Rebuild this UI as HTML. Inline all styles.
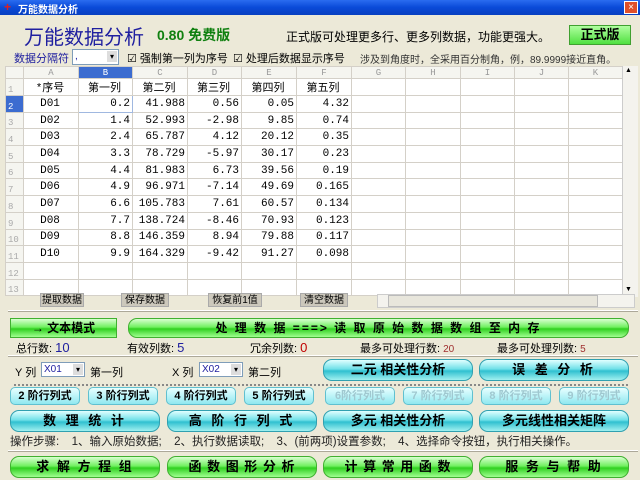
<!DOCTYPE html><html><head><meta charset="utf-8"><style>
*{margin:0;padding:0;box-sizing:border-box}
body{width:640px;height:480px;overflow:hidden;background:#ece9d8;font-family:"Liberation Sans","Noto Sans CJK SC",sans-serif;font-size:11px;position:relative;color:#000}
.a{position:absolute;white-space:nowrap}
.tb{left:0;top:0;width:640px;height:15px;background:linear-gradient(#2a6cf0,#0a4ad8 50%,#0840c0);color:#fff;font-size:10px;font-weight:bold;padding:1px 0 0 18px}
table{border-collapse:collapse;position:absolute;left:5px;top:66px;table-layout:fixed;background:#fff}
td{border:1px solid #d4d0c8;height:16.7px;font-size:11px;font-family:"Liberation Mono","Noto Sans CJK SC",monospace;text-align:right;padding-right:2px;overflow:hidden}
tr.h td{height:12px;background:#f5f5f0;color:#999;text-align:center;font-size:9px;padding:0}
td.n{background:#f5f5f0;color:#aaa;font-size:9px;text-align:left;padding-left:2px;vertical-align:bottom}
.c{text-align:center}
.gb{border-radius:9px;background:linear-gradient(#d8ffd0,#70f060 45%,#30d020 55%,#a0ff90);border:1px solid #40b030;font-weight:bold;text-align:center;font-size:12px}
.cb{border-radius:9px;background:linear-gradient(#e0ffff,#70e0e8 45%,#30c0d0 55%,#a0f0f0);border:1px solid #30a0b0;font-weight:bold;text-align:center;font-size:12px}
.sm{border-radius:5px;background:linear-gradient(#e8ffff,#90e8f0);border:1px solid #60c0d0;font-weight:bold;text-align:center;font-size:11px;height:18px;line-height:17px}
.dis{color:#a0c8d0}
.gray{background:#ccc8bc;border:1px solid #aaa;font-size:10px;height:14px;line-height:13px;text-align:center}
.sep{border-top:1px solid #fff;border-bottom:1px solid #aca899;height:2px;left:8px;width:630px}
.sel{height:15px;background:#fff;border:1px solid #7f9db9;font-size:10px;color:#2020a0;padding-left:2px;line-height:13px;width:44px}
.sel:after{content:"▾";position:absolute;right:1px;top:1px;width:10px;height:11px;background:#ddd;color:#000;font-size:8px;text-align:center;line-height:11px}
</style></head><body>
<div class="a tb">万能数据分析</div>
<div class="a" style="left:4px;top:0;color:#e02020;font-size:12px;font-weight:bold">+</div>
<div class="a" style="left:624px;top:1px;width:14px;height:13px;background:#e0502a;border:1px solid #fff;color:#fff;font-size:10px;text-align:center;line-height:11px">×</div>
<div class="a" style="left:24px;top:21px;font-size:20px;color:#2020a0">万能数据分析</div>
<div class="a" style="left:157px;top:25px;font-size:14px;color:#108010;font-weight:bold">0.80 免费版</div>
<div class="a" style="left:286px;top:28px;font-size:12px">正式版可处理更多行、更多列数据，功能更强大。</div>
<div class="a" style="left:569px;top:25px;width:62px;height:20px;background:linear-gradient(#b0ffa0,#50e040);border:1px solid #40a030;font-weight:bold;font-size:13px;text-align:center;line-height:18px">正式版</div>
<div class="a" style="left:14px;top:50px;color:#2020a0;font-size:11px">数据分隔符</div>
<div class="a sel" style="left:72px;top:49px;width:47px;height:16px">,</div>
<div class="a" style="left:127px;top:50px;font-size:11px">☑ 强制第一列为序号</div>
<div class="a" style="left:233px;top:50px;font-size:11px">☑ 处理后数据显示序号</div>
<div class="a" style="left:360px;top:51px;font-size:10px;color:#333">涉及到角度时，全采用百分制角，例，89.9999接近直角。</div>
<table>
<colgroup><col style="width:18px"><col style="width:55px"><col style="width:54px"><col style="width:55px"><col style="width:54px"><col style="width:55px"><col style="width:55px"><col style="width:54px"><col style="width:55px"><col style="width:54px"><col style="width:54px"><col style="width:54px"></colgroup>
<tr class="h"><td></td><td>A</td><td style="background:#3c6cd0;color:#fff">B</td><td>C</td><td>D</td><td>E</td><td>F</td><td>G</td><td>H</td><td>I</td><td>J</td><td>K</td></tr>
<tr><td class="n">1</td><td class="c">*序号</td><td class="c">第一列</td><td class="c">第二列</td><td class="c">第三列</td><td class="c">第四列</td><td class="c">第五列</td><td></td><td></td><td></td><td></td><td></td></tr>
<tr><td class="n" style="background:#3c6cd0;color:#fff">2</td><td class="c">D01</td><td style="border:1px solid #a0b8e0">0.2</td><td>41.988</td><td>0.56</td><td>0.05</td><td>4.32</td><td></td><td></td><td></td><td></td><td></td></tr>
<tr><td class="n">3</td><td class="c">D02</td><td>1.4</td><td>52.993</td><td>-2.98</td><td>9.85</td><td>0.74</td><td></td><td></td><td></td><td></td><td></td></tr>
<tr><td class="n">4</td><td class="c">D03</td><td>2.4</td><td>65.787</td><td>4.12</td><td>20.12</td><td>0.35</td><td></td><td></td><td></td><td></td><td></td></tr>
<tr><td class="n">5</td><td class="c">D04</td><td>3.3</td><td>78.729</td><td>-5.97</td><td>30.17</td><td>0.23</td><td></td><td></td><td></td><td></td><td></td></tr>
<tr><td class="n">6</td><td class="c">D05</td><td>4.4</td><td>81.983</td><td>6.73</td><td>39.56</td><td>0.19</td><td></td><td></td><td></td><td></td><td></td></tr>
<tr><td class="n">7</td><td class="c">D06</td><td>4.9</td><td>96.971</td><td>-7.14</td><td>49.69</td><td>0.165</td><td></td><td></td><td></td><td></td><td></td></tr>
<tr><td class="n">8</td><td class="c">D07</td><td>6.6</td><td>105.783</td><td>7.61</td><td>60.57</td><td>0.134</td><td></td><td></td><td></td><td></td><td></td></tr>
<tr><td class="n">9</td><td class="c">D08</td><td>7.7</td><td>138.724</td><td>-8.46</td><td>70.93</td><td>0.123</td><td></td><td></td><td></td><td></td><td></td></tr>
<tr><td class="n">10</td><td class="c">D09</td><td>8.8</td><td>146.359</td><td>8.94</td><td>79.88</td><td>0.117</td><td></td><td></td><td></td><td></td><td></td></tr>
<tr><td class="n">11</td><td class="c">D10</td><td>9.9</td><td>164.329</td><td>-9.42</td><td>91.27</td><td>0.098</td><td></td><td></td><td></td><td></td><td></td></tr>
<tr><td class="n">12</td><td></td><td></td><td></td><td></td><td></td><td></td><td></td><td></td><td></td><td></td><td></td></tr>
<tr><td class="n">13</td><td></td><td></td><td></td><td></td><td></td><td></td><td></td><td></td><td></td><td></td><td></td></tr>
</table>
<div class="a" style="left:622px;top:66px;width:16px;height:231px;background:#f4f3ee;border-left:1px solid #ccc"></div>
<div class="a" style="left:625px;top:67px;font-size:7px">▲</div><div class="a" style="left:625px;top:286px;font-size:7px">▼</div>
<div class="a gray" style="left:40px;top:293px;width:44px">提取数据</div>
<div class="a gray" style="left:121px;top:293px;width:48px">保存数据</div>
<div class="a gray" style="left:208px;top:293px;width:54px">恢复前1值</div>
<div class="a gray" style="left:300px;top:293px;width:48px">清空数据</div>
<div class="a" style="left:377px;top:294px;width:258px;height:14px;background:#f4f3ee;border:1px solid #ccc"></div>
<div class="a" style="left:388px;top:295px;width:210px;height:12px;background:#e8e6dc;border:1px solid #bbb"></div>
<div class="a sep" style="top:310px"></div>
<div class="a gb" style="left:10px;top:318px;width:107px;height:20px;border-radius:0;line-height:18px">→ 文本模式</div>
<div class="a gb" style="left:128px;top:318px;width:501px;height:20px;line-height:18px;letter-spacing:2px">处 理 数 据 ===&gt; 读 取 原 始 数 据 数 组 至 内 存</div>
<div class="a" style="left:16px;top:340px">总行数: <span style="color:#2020a0;font-size:13px">10</span></div>
<div class="a" style="left:127px;top:340px">有效列数: <span style="color:#2020a0;font-size:13px">5</span></div>
<div class="a" style="left:250px;top:340px">冗余列数: <span style="color:#c00000;font-size:13px">0</span></div>
<div class="a" style="left:360px;top:340px">最多可处理行数: <span style="color:#a03030;font-size:10px">20</span></div>
<div class="a" style="left:497px;top:340px">最多可处理列数: <span style="color:#a03030;font-size:10px">5</span></div>
<div class="a sep" style="top:355px"></div>
<div class="a" style="left:15px;top:364px">Y 列</div>
<div class="a sel" style="left:41px;top:362px">X01</div>
<div class="a" style="left:90px;top:364px">第一列</div>
<div class="a" style="left:172px;top:364px">X 列</div>
<div class="a sel" style="left:199px;top:362px">X02</div>
<div class="a" style="left:248px;top:364px">第二列</div>
<div class="a cb" style="left:323px;top:359px;width:150px;height:22px;line-height:20px;font-size:13px">二元 相关性分析</div>
<div class="a cb" style="left:479px;top:359px;width:150px;height:22px;line-height:20px;font-size:13px;letter-spacing:3px">误 差 分 析</div>
<div class="a" style="left:14px;top:384px;width:614px;border-top:2px dotted #888"></div>
<div class="a sm" style="left:10px;top:387px;width:70px">2 阶行列式</div>
<div class="a sm" style="left:88px;top:387px;width:70px">3 阶行列式</div>
<div class="a sm" style="left:166px;top:387px;width:70px">4 阶行列式</div>
<div class="a sm" style="left:244px;top:387px;width:70px">5 阶行列式</div>
<div class="a sm dis" style="left:325px;top:387px;width:70px">6阶行列式</div>
<div class="a sm dis" style="left:403px;top:387px;width:70px">7 阶行列式</div>
<div class="a sm dis" style="left:481px;top:387px;width:70px">8 阶行列式</div>
<div class="a sm dis" style="left:559px;top:387px;width:70px">9 阶行列式</div>
<div class="a cb" style="left:10px;top:410px;width:150px;height:22px;line-height:20px;font-size:13px;letter-spacing:3px">数 理 统 计</div>
<div class="a cb" style="left:167px;top:410px;width:150px;height:22px;line-height:20px;font-size:13px;letter-spacing:3px">高 阶 行 列 式</div>
<div class="a cb" style="left:323px;top:410px;width:150px;height:22px;line-height:20px;font-size:13px">多元 相关性分析</div>
<div class="a cb" style="left:479px;top:410px;width:150px;height:22px;line-height:20px;font-size:13px">多元线性相关矩阵</div>
<div class="a" style="left:10px;top:433px;font-size:11.5px;color:#222;word-spacing:3px">操作步骤: &nbsp;1、输入原始数据; &nbsp;2、执行数据读取; &nbsp;3、(前两项)设置参数; &nbsp;4、选择命令按钮，执行相关操作。</div>
<div class="a sep" style="top:450px"></div>
<div class="a gb" style="left:10px;top:456px;width:150px;height:22px;line-height:20px;font-size:13px;letter-spacing:2px">求 解 方 程 组</div>
<div class="a gb" style="left:167px;top:456px;width:150px;height:22px;line-height:20px;font-size:13px;letter-spacing:1px">函 数 图 形 分 析</div>
<div class="a gb" style="left:323px;top:456px;width:150px;height:22px;line-height:20px;font-size:13px;letter-spacing:1px">计 算 常 用 函 数</div>
<div class="a gb" style="left:479px;top:456px;width:150px;height:22px;line-height:20px;font-size:13px;letter-spacing:2px">服 务 与 帮 助</div>
</body></html>
